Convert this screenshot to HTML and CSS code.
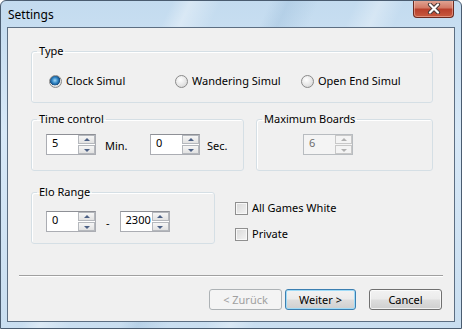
FILE: index.html
```html
<html lang="en">
  <head>
    <meta charset="UTF-8" />
    <title>Settings</title>
    <link rel="stylesheet" href="styles.css">
  </head>
  <body>
    <div class="window">
      <div class="titlebar">
        <span class="title">Settings</span>
        <button class="close-button">
          <svg width="16" height="11" viewBox="0 0 16 11">
            <path d="M4 1.5 L12 9.5 M12 1.5 L4 9.5" stroke="#4a3a38" stroke-width="4.2" stroke-linecap="round" />
            <path d="M4 1.5 L12 9.5 M12 1.5 L4 9.5" stroke="#ffffff" stroke-width="2.2" stroke-linecap="round" />
          </svg>
        </button>
      </div>
      <div class="client">
        <div class="content">
          <fieldset class="group type-group">
            <legend>Type</legend>
            <div class="radio-row">
              <label class="radio checked"><span class="radio-box"></span>Clock Simul</label>
              <label class="radio"><span class="radio-box"></span>Wandering Simul</label>
              <label class="radio"><span class="radio-box"></span>Open End Simul</label>
            </div>
          </fieldset>

          <div class="row row-time">
            <fieldset class="group time-group">
              <legend>Time control</legend>
              <div class="spin-row">
                <div class="spinner">
                  <div class="spin-text">5</div>
                  <div class="spin-buttons">
                    <span class="spin-up"></span>
                    <span class="spin-down"></span>
                  </div>
                </div>
                <span class="unit unit-min">Min.</span>
                <div class="spinner">
                  <div class="spin-text">0</div>
                  <div class="spin-buttons">
                    <span class="spin-up"></span>
                    <span class="spin-down"></span>
                  </div>
                </div>
                <span class="unit unit-sec">Sec.</span>
              </div>
            </fieldset>
            <fieldset class="group boards-group">
              <legend>Maximum Boards</legend>
              <div class="spin-row boards-row">
                <div class="spinner disabled">
                  <div class="spin-text">6</div>
                  <div class="spin-buttons">
                    <span class="spin-up"></span>
                    <span class="spin-down"></span>
                  </div>
                </div>
              </div>
            </fieldset>
          </div>

          <div class="row row-elo">
            <fieldset class="group elo-group">
              <legend>Elo Range</legend>
              <div class="spin-row elo-row">
                <div class="spinner">
                  <div class="spin-text">0</div>
                  <div class="spin-buttons">
                    <span class="spin-up"></span>
                    <span class="spin-down"></span>
                  </div>
                </div>
                <span class="dash">-</span>
                <div class="spinner">
                  <div class="spin-text">2300</div>
                  <div class="spin-buttons">
                    <span class="spin-up"></span>
                    <span class="spin-down"></span>
                  </div>
                </div>
              </div>
            </fieldset>
            <div class="checks">
              <label class="check"><span class="check-box"></span>All Games White</label>
              <label class="check"><span class="check-box"></span>Private</label>
            </div>
          </div>
        </div>

        <div class="footer">
          <div class="separator"></div>
          <div class="buttons">
            <button class="btn btn-disabled">&lt; Zurück</button>
            <button class="btn btn-default">Weiter &gt;</button>
            <button class="btn btn-cancel">Cancel</button>
          </div>
        </div>
      </div>
    </div>
  </body>
</html>
```

FILE: styles.css
```css
body {
  margin: 0;
  font-family: "Noto Sans", "Open Sans", sans-serif;
  font-size: 11px;
  color: #000;
}

.window {
  width: 462px;
  height: 329px;
  box-sizing: border-box;
  border: 1px solid #4a5c70;
  border-radius: 6px 6px 0 0;
  display: flex;
  flex-direction: column;
  background:
    linear-gradient(115deg, transparent 28%, rgba(255, 255, 255, 0.35) 31%, transparent 36%, transparent 44%, rgba(150, 185, 215, 0.35) 47%, transparent 52%, transparent 58%, rgba(255, 255, 255, 0.3) 62%, transparent 66%),
    linear-gradient(to bottom, #c3dbef 0%, #d7e8f7 40%, #c9def0 100%);
  overflow: hidden;
}

.titlebar {
  height: 26px;
  display: flex;
  justify-content: space-between;
  align-items: flex-start;
  padding-left: 7px;
}

.title {
  font-size: 12px;
  line-height: 14px;
  margin-top: 7px;
  color: #000;
}

.close-button {
  width: 41px;
  height: 18px;
  margin-top: -1px;
  margin-right: 7px;
  padding: 0;
  border: 1px solid #6b2a1f;
  border-top: none;
  border-radius: 0 0 4px 4px;
  background: linear-gradient(to bottom, #e2a898 0%, #d37a66 45%, #b9402c 55%, #c85a3f 100%);
  box-shadow: inset 0 0 0 1px rgba(255, 210, 200, 0.45);
  display: flex;
  align-items: center;
  justify-content: center;
}

.client {
  margin: 0 6px 6px;
  flex: 1;
  border: 1px solid #5c6e82;
  background-color: #f0f0f0;
  display: flex;
  flex-direction: column;
  padding: 16px 0 11px;
}

.content {
  padding: 0 21px 0 23px;
}

.group {
  margin: 0;
  padding: 0;
  border: 1px solid #d5dfe5;
  border-radius: 3px;
  box-shadow: inset 1px 1px 0 #fff;
}

.group legend {
  margin-left: 5px;
  padding: 0 2px;
  line-height: 14px;
  font-size: 11px;
}

.type-group .radio-row {
  display: grid;
  grid-template-columns: 126px 126px auto;
  padding: 15px 0 13px 17px;
}

.radio,
.check {
  display: flex;
  align-items: center;
  height: 16px;
  line-height: 16px;
}

.radio-box {
  width: 11px;
  height: 11px;
  border: 1px solid #8a8a8a;
  border-radius: 50%;
  margin-right: 4px;
  background: radial-gradient(circle at 40% 35%, #ffffff 0%, #e6e6e6 55%, #cfcfcf 100%);
}

.radio.checked .radio-box {
  background:
    radial-gradient(circle at 45% 40%, #9fd7f7 0%, #2a7fc0 35%, #1b4f80 55%, transparent 58%),
    radial-gradient(circle at 40% 35%, #ffffff 0%, #e6e6e6 55%, #cfcfcf 100%);
}

.row {
  display: flex;
}

.row-time {
  margin-top: 9px;
  gap: 12px;
}

.time-group {
  width: 213px;
  box-sizing: border-box;
}

.boards-group {
  flex: 1;
}

.spin-row {
  display: flex;
  align-items: center;
  padding: 8px 0 15px 14px;
}

.boards-row {
  padding-left: 46px;
}

.spinner {
  display: flex;
  width: 50px;
  height: 21px;
  box-sizing: border-box;
  border: 1px solid #abadb3;
  border-top-color: #8e9096;
  background-color: #fff;
}

.spin-text {
  flex: 1;
  padding: 1px 0 0 5px;
  line-height: 14px;
}

.spin-buttons {
  width: 17px;
  display: flex;
  flex-direction: column;
  gap: 1px;
  padding: 0;
}

.spin-up,
.spin-down {
  flex: 1;
  border: 1px solid #b5b8bd;
  background: linear-gradient(to bottom, #f6f6f6, #e2e2e2);
  position: relative;
}

.spin-up::after,
.spin-down::after {
  content: "";
  position: absolute;
  left: 50%;
  top: 50%;
  margin-left: -3px;
  border-left: 3px solid transparent;
  border-right: 3px solid transparent;
}

.spin-up::after {
  margin-top: -2px;
  border-bottom: 3px solid #4d6185;
}

.spin-down::after {
  margin-top: -1px;
  border-top: 3px solid #4d6185;
}

.spinner.disabled {
  border-color: #b8bcc0;
  background-color: #f4f4f4;
}

.spinner.disabled .spin-text {
  color: #6d6d6d;
}

.spinner.disabled .spin-up,
.spinner.disabled .spin-down {
  border-color: #c8c8c8;
  background: #f4f4f4;
}

.spinner.disabled .spin-up::after {
  border-bottom-color: #b0b0b0;
}

.spinner.disabled .spin-down::after {
  border-top-color: #b0b0b0;
}

.unit-min {
  margin: 2px 21px 0 9px;
  width: 24px;
}

.unit-sec {
  margin: 2px 0 0 7px;
}

.row-elo {
  margin-top: 14px;
  gap: 20px;
}

.elo-group {
  width: 184px;
  box-sizing: border-box;
}

.elo-row {
  padding: 12px 0 11px 14px;
}

.dash {
  margin: 2px 10px 0 10px;
}

.checks {
  display: flex;
  flex-direction: column;
  gap: 10px;
  padding-top: 15px;
}

.check-box {
  width: 11px;
  height: 11px;
  border: 1px solid #8f8f8f;
  margin-right: 4px;
  background: linear-gradient(135deg, #d8d8d8, #f4f4f4);
  box-shadow: inset 0 0 0 1px #f8f8f8;
}

.footer {
  margin-top: auto;
  padding: 0 11px;
}

.separator {
  border-top: 1px solid #a0a0a0;
  border-bottom: 1px solid #ffffff;
}

.buttons {
  display: flex;
  justify-content: flex-end;
  margin-top: 12px;
  padding-right: 1px;
}

.btn {
  width: 73px;
  height: 21px;
  padding: 0;
  font-family: inherit;
  font-size: 11px;
  border: 1px solid #707070;
  border-radius: 3px;
  background: linear-gradient(to bottom, #f2f2f2 0%, #ebebeb 48%, #dddddd 52%, #cfcfcf 100%);
  box-shadow: inset 0 0 0 1px rgba(255, 255, 255, 0.7);
  color: #000;
}

.btn-disabled {
  border-color: #adb2b5;
  background: #f4f4f4;
  color: #a0a0a0;
  box-shadow: none;
}

.btn-default {
  margin-left: 3px;
  width: 71px;
  border-color: #3c7fb1;
  box-shadow: inset 0 0 0 1px #9fdbf7;
}

.btn-cancel {
  margin-left: 13px;
}
```
